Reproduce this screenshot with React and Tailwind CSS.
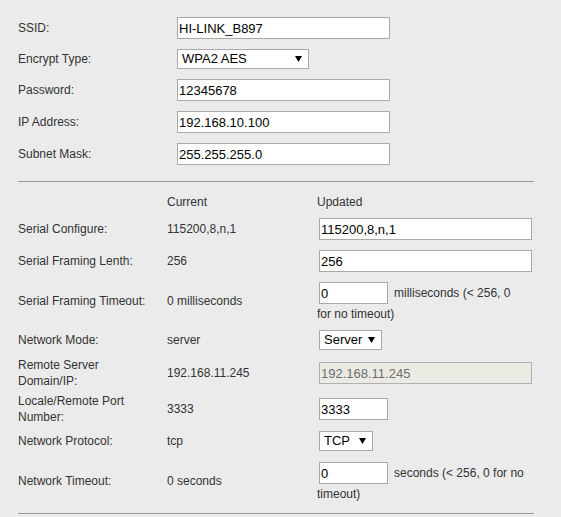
import React from 'react';

const font = "font-['Liberation_Sans',Arial,sans-serif]";

function TextBox({ value, className = 'w-[213px]', disabled = false }) {
  return (
    <input
      type="text"
      defaultValue={value}
      disabled={disabled}
      className={`h-[22px] border px-[1px] text-[13px] outline-none ${font} ${
        disabled
          ? 'border-[#b0b0b0] bg-[#ebebe4] text-[#6d6d6d]'
          : 'border-[#a9a9a9] bg-white text-black'
      } ${className}`}
    />
  );
}

function DropDown({ value, className = '' }) {
  return (
    <div
      className={`flex h-[20px] items-center justify-between border border-[#a9a9a9] bg-white pl-[4px] pr-[6px] text-[13px] text-black ${className}`}
    >
      <span>{value}</span>
      <svg width="7" height="6" viewBox="0 0 7 6">
        <path d="M0 0h7L3.5 6z" fill="#000" />
      </svg>
    </div>
  );
}

function WifiRow({ label, h = 'h-8', children }) {
  return (
    <div className={`flex items-center ${h}`}>
      <div className="w-[159px]">{label}</div>
      {children}
    </div>
  );
}

function SerialRow({ label, current, h, children }) {
  return (
    <div className={`flex items-center ${h}`}>
      <div className="w-[149px] leading-[16px]">{label}</div>
      <div className="w-[150px]">{current}</div>
      <div className="w-[217px]">{children}</div>
    </div>
  );
}

function TimeoutBox({ unit, rest }) {
  return (
    <div>
      <div className="flex h-[22px] items-center">
        <TextBox value="0" className="ml-[2px] w-[69px]" />
        <span className="ml-[6px]">{unit}</span>
      </div>
      <div className="h-[16px] leading-[20px]">{rest}</div>
    </div>
  );
}

export default function App() {
  return (
    <div className={`min-h-[517px] w-[561px] bg-[#ebebeb] text-[12px] text-[#333] ${font}`}>
      <div className="pl-[18px] pt-3">
        <WifiRow label="SSID:">
          <TextBox value="HI-LINK_B897" />
        </WifiRow>
        <WifiRow label="Encrypt Type:" h="h-[30px]">
          <DropDown value="WPA2 AES" className="w-[132px]" />
        </WifiRow>
        <WifiRow label="Password:">
          <TextBox value="12345678" />
        </WifiRow>
        <WifiRow label="IP Address:">
          <TextBox value="192.168.10.100" />
        </WifiRow>
        <WifiRow label="Subnet Mask:">
          <TextBox value="255.255.255.0" />
        </WifiRow>
      </div>

      <div className="ml-[18px] mt-[11px] h-px w-[516px] bg-[#999]" />

      <div className="pl-[18px]">
        <div className="mt-[9px] flex h-[22px] items-center">
          <div className="w-[149px]" />
          <div className="w-[150px]">Current</div>
          <div>Updated</div>
        </div>
        <SerialRow label="Serial Configure:" current="115200,8,n,1" h="h-8">
          <TextBox value="115200,8,n,1" className="ml-[2px] w-[213px]" />
        </SerialRow>
        <SerialRow label="Serial Framing Lenth:" current="256" h="h-8">
          <TextBox value="256" className="ml-[2px] w-[213px]" />
        </SerialRow>
        <SerialRow label="Serial Framing Timeout:" current="0 milliseconds" h="h-[48px]">
          <TimeoutBox unit="milliseconds (< 256, 0" rest="for no timeout)" />
        </SerialRow>
        <SerialRow label="Network Mode:" current="server" h="h-[30px]">
          <DropDown value="Server" className="ml-[2px] w-[63px]" />
        </SerialRow>
        <SerialRow
          label={<>Remote Server<br />Domain/IP:</>}
          current="192.168.11.245"
          h="h-[36px]"
        >
          <TextBox value="192.168.11.245" className="ml-[2px] w-[213px]" disabled />
        </SerialRow>
        <SerialRow
          label={<>Locale/Remote Port<br />Number:</>}
          current="3333"
          h="h-[36px]"
        >
          <TextBox value="3333" className="ml-[2px] w-[69px]" />
        </SerialRow>
        <SerialRow label="Network Protocol:" current="tcp" h="h-[28px]">
          <DropDown value="TCP" className="ml-[2px] w-[54px]" />
        </SerialRow>
        <SerialRow label="Network Timeout:" current="0 seconds" h="h-[52px]">
          <TimeoutBox unit="seconds (< 256, 0 for no" rest="timeout)" />
        </SerialRow>
      </div>

      <div className="ml-[18px] mt-[6px] h-px w-[516px] bg-[#999]" />
    </div>
  );
}
